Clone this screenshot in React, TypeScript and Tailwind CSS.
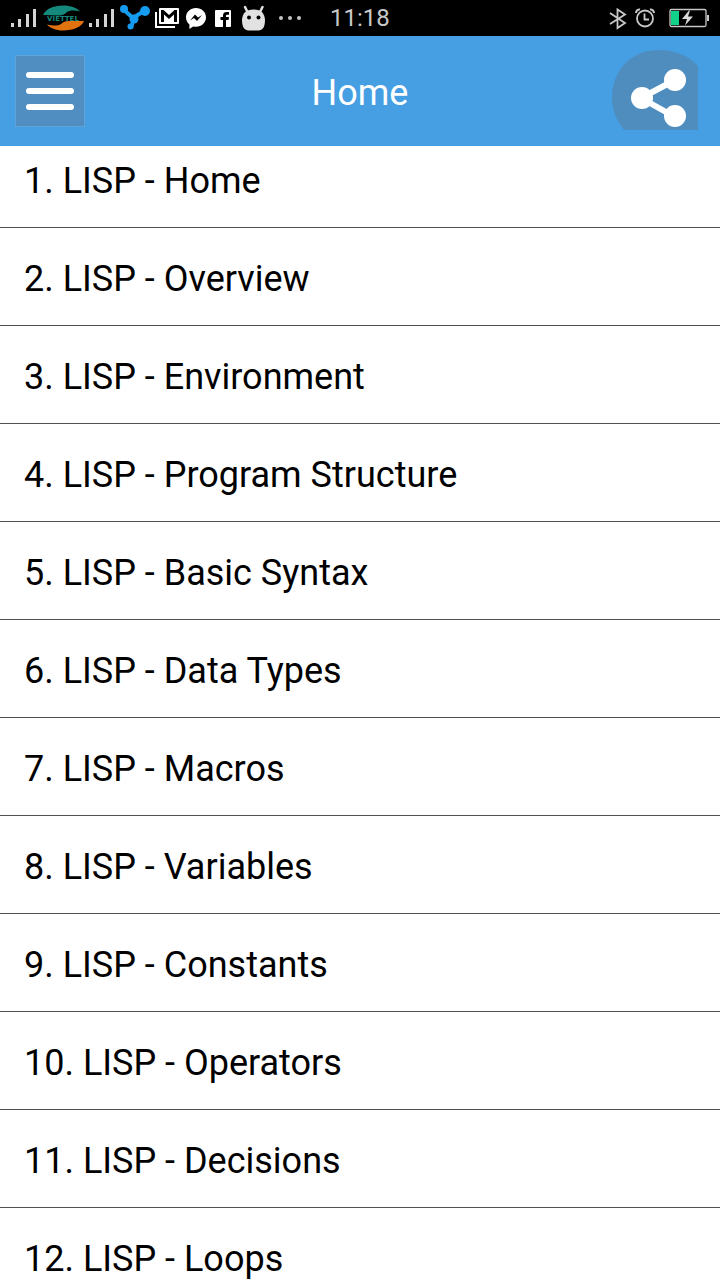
const chapters = [
  "LISP - Home",
  "LISP - Overview",
  "LISP - Environment",
  "LISP - Program Structure",
  "LISP - Basic Syntax",
  "LISP - Data Types",
  "LISP - Macros",
  "LISP - Variables",
  "LISP - Constants",
  "LISP - Operators",
  "LISP - Decisions",
  "LISP - Loops",
];

const SignalIcon = () => (
  <svg width="26" height="36" viewBox="0 0 26 36" fill="#d4d4d4">
    <rect x="0" y="23" width="3" height="4" />
    <rect x="7" y="19" width="3" height="8" />
    <rect x="15" y="14" width="3" height="13" />
    <rect x="22" y="9" width="3" height="18" />
  </svg>
);

const ViettelLogo = () => (
  <svg width="42" height="36" viewBox="0 0 42 36">
    <path
      d="M1 15C4 9 11 5.500 21 5.500c8 0 14 2.500 17 6-6-1.500-10-1.500-13 .5-2 2-4 3.500-8 3.500z"
      fill="#15897b"
    />
    <path
      d="M42 21c-2 5.500-10 9.500-21 9.500-7 0-13-2.500-16-6 6 1.500 11 1.500 14-.5 2-2 4-3 8-3z"
      fill="#e0720f"
    />
    <text
      x="21"
      y="21"
      textAnchor="middle"
      fontSize="7"
      fontWeight="700"
      fill="#15897b"
      fontFamily="DejaVu Sans, sans-serif"
    >
      VIETTEL
    </text>
  </svg>
);

const MoleculeIcon = () => (
  <svg width="30" height="36" viewBox="0 0 30 36" fill="#159bf0">
    <path
      d="M4 10l9 8 11-7M14 18l-3 10"
      fill="none"
      stroke="#159bf0"
      strokeWidth="4"
    />
    <circle cx="4" cy="9" r="4" />
    <circle cx="25" cy="11" r="5" />
    <circle cx="14" cy="19" r="4.500" />
    <circle cx="10.500" cy="26.500" r="3" />
  </svg>
);

const MailIcon = () => (
  <svg width="24" height="36" viewBox="0 0 24 36">
    <path d="M1 12v15h19" fill="none" stroke="#fff" strokeWidth="2" />
    <rect x="4" y="8" width="20" height="16" rx="1" fill="#fff" />
    <path
      d="M6 10h2.500l5.500 5 5.500-5H22v12h-3v-7.500l-5 4.500-5-4.500V22H6z"
      fill="#000"
    />
  </svg>
);

const MessengerIcon = () => (
  <svg width="20" height="36" viewBox="0 0 20 36">
    <path
      d="M10 8C4.400 8 0 12 0 17.300c0 3 1.300 5.500 3.400 7.200V29l3.800-2.500c.9.2 1.800.3 2.800.3 5.600 0 10-4.200 10-9.500S15.600 8 10 8z"
      fill="#fff"
    />
    <path d="M4 20.500l5-6 3 3 4-2.500-5 6-3-3z" fill="#000" />
  </svg>
);

const FacebookIcon = () => (
  <svg width="18" height="36" viewBox="0 0 18 36">
    <rect x="1" y="10" width="16" height="17" rx="1" fill="#fff" />
    <path
      d="M9 27v-7H6.500v-3H9v-1.500C9 13 10.500 12 12.500 12H15v2.700h-1.700c-.9 0-1.300.4-1.300 1.300v1h3l-.5 3H12v7z"
      fill="#000"
    />
  </svg>
);

const DroidIcon = () => (
  <svg width="30" height="36" viewBox="-1 0 30 36" fill="#e2e2e2">
    <path
      d="M4 7l2.500 5M21.500 7l-2.500 5"
      stroke="#e2e2e2"
      strokeWidth="2.500"
      strokeLinecap="round"
    />
    <path d="M12.500 9.500C5 9.500 1.500 13 1 20c0 7 2.500 10.500 6.500 10.500h10c4 0 6.500-3.500 6.500-10.500-.5-7-4-10.500-11.500-10.500z" />
    <circle cx="8" cy="17.500" r="2" fill="#000" />
    <circle cx="17.500" cy="17.500" r="2" fill="#000" />
  </svg>
);

const MoreIcon = () => (
  <svg width="24" height="36" viewBox="0 0 24 36" fill="#c4c4c4">
    <circle cx="3" cy="18" r="2" />
    <circle cx="12" cy="18" r="2" />
    <circle cx="21" cy="18" r="2" />
  </svg>
);

const BluetoothIcon = () => (
  <svg
    width="18"
    height="36"
    viewBox="0 0 18 36"
    fill="none"
    stroke="#c8c8c8"
    strokeWidth="1.800"
  >
    <path d="M1 13l15 10-7.500 5V9.500l7.500 5L1 24" />
  </svg>
);

const AlarmIcon = () => (
  <svg
    width="20"
    height="36"
    viewBox="0 0 20 36"
    fill="none"
    stroke="#c8c8c8"
    strokeWidth="1.800"
  >
    <circle cx="10" cy="18.500" r="8" />
    <path d="M9.500 13.500V19.500H14" />
    <path d="M1 13c0-2 2-4 4-3.500M19 13c0-2-2-4-4-3.500" strokeWidth="2" />
  </svg>
);

const BatteryIcon = () => (
  <svg width="41" height="36" viewBox="0 0 41 36">
    <rect
      x="1"
      y="9.500"
      width="36"
      height="17"
      rx="1.500"
      fill="none"
      stroke="#c8c8c8"
      strokeWidth="1.300"
    />
    <rect x="2" y="11" width="8" height="14" fill="#12d28a" />
    <path d="M20 10.500l-7 8.500h5l-2 6.500 8-9h-5l2-6z" fill="#d8d8d8" />
    <rect x="38" y="15" width="2" height="6" fill="#c8c8c8" />
  </svg>
);

const StatusBar = () => (
  <div className="flex h-9 shrink-0 items-center bg-black pr-[10px] pl-[11px]">
    <div className="flex items-center gap-[5px]">
      <SignalIcon />
      <ViettelLogo />
      <SignalIcon />
      <MoleculeIcon />
      <MailIcon />
    </div>
    <div className="ml-[7px] flex items-center gap-2">
      <MessengerIcon />
      <FacebookIcon />
      <DroidIcon />
      <MoreIcon />
    </div>
    <span className="ml-7 text-2xl text-[#c8c8c8]">11:18</span>
    <div className="ml-auto flex items-center">
      <BluetoothIcon />
      <span className="w-2" />
      <AlarmIcon />
      <span className="w-[14px]" />
      <BatteryIcon />
    </div>
  </div>
);

const Header = () => (
  <header className="z-10 flex h-[110px] shrink-0 items-start justify-between bg-[#459fe2] px-[15px]">
    <div className="flex-1 pt-[19px]">
      <button
        type="button"
        aria-label="Menu"
        className="block border border-[#60a3d8] bg-[#508dc0]"
      >
        <svg width="68" height="70" viewBox="0 0 68 70">
          <path
            d="M13 19h42M13 35h42M13 51h42"
            stroke="#fff"
            strokeWidth="6"
            strokeLinecap="round"
          />
        </svg>
      </button>
    </div>
    <h1 className="pt-[33px] text-4xl leading-[48px] text-white">Home</h1>
    <div className="flex flex-1 justify-end pt-[14px]">
      <button type="button" aria-label="Share" className="mr-[7px] block">
        <svg width="86" height="80" viewBox="0 0 86 80">
          <path
            d="M12 80C4 70 0 60 0 47 0 20 20 0 46 0c16 0 30 5 40 16v64z"
            fill="#508dbf"
          />
          <path
            d="M63 30L29 48l34 19"
            fill="none"
            stroke="#fff"
            strokeWidth="6"
          />
          <circle cx="63" cy="30" r="11" fill="#fff" />
          <circle cx="30" cy="48" r="11" fill="#fff" />
          <circle cx="63" cy="66" r="11" fill="#fff" />
        </svg>
      </button>
    </div>
  </header>
);

const App = () => {
  return (
    <div className="flex h-screen flex-col overflow-hidden bg-white font-['Roboto',sans-serif]">
      <StatusBar />
      <Header />
      {/* The list is scrolled a little way under the header */}
      <main className="min-h-0 flex-1 overflow-hidden">
        <ol className="-mt-4">
          {chapters.map((title, index) => (
            <li key={title} className="border-b border-[#505050]">
              <a
                href={`#chapter-${index + 1}`}
                className="block px-6 pt-7 pb-[23px] text-4xl leading-[46px] text-black"
              >
                {index + 1}. {title}
              </a>
            </li>
          ))}
        </ol>
      </main>
    </div>
  );
};

export default App;
